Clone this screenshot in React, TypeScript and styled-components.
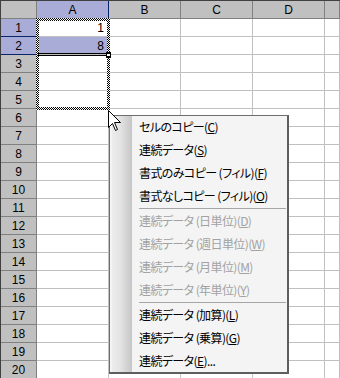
import styled, { createGlobalStyle } from 'styled-components';

const GlobalStyle = createGlobalStyle`
  html, body {
    margin: 0;
    padding: 0;
    background: #fff;
  }
  body {
    font-family: 'Liberation Sans', Arial, sans-serif;
  }
`;

const NAVY = '#0a246a';
const LAVENDER = '#a9acd6';
// column E only peeks in at the right edge, so its label is out of view
const COLS = ['A', 'B', 'C', 'D', 'E'];
const VISIBLE_LABELS = ['A', 'B', 'C', 'D'];
const ROWS = Array.from({ length: 20 }, (_, i) => i + 1);

interface MenuEntry {
  label: string;
  key?: string;
  tail?: string;
  disabled?: boolean;
  separator?: boolean;
}

const menuEntries: MenuEntry[] = [
  { label: 'セルのコピー(', key: 'C', tail: ')' },
  { label: '連続データ(', key: 'S', tail: ')' },
  { label: '書式のみコピー (フィル)(', key: 'F', tail: ')' },
  { label: '書式なしコピー (フィル)(', key: 'O', tail: ')' },
  { label: '', separator: true },
  { label: '連続データ (日単位)(', key: 'D', tail: ')', disabled: true },
  { label: '連続データ (週日単位)(', key: 'W', tail: ')', disabled: true },
  { label: '連続データ (月単位)(', key: 'M', tail: ')', disabled: true },
  { label: '連続データ (年単位)(', key: 'Y', tail: ')', disabled: true },
  { label: '', separator: true },
  { label: '連続データ (加算)(', key: 'L', tail: ')' },
  { label: '連続データ (乗算)(', key: 'G', tail: ')' },
  { label: '連続データ(', key: 'E', tail: ')...' },
];

const cellValues: Record<string, string> = { A1: '1', A2: '8' };

const App = () => {
  return (
    <>
      <GlobalStyle />
      <Window>
        <Sheet>
          <HeaderCell />
          {COLS.map((c) => (
            <HeaderCell key={c} $selected={c === 'A'}>
              {VISIBLE_LABELS.includes(c) ? c : ''}
            </HeaderCell>
          ))}
          {ROWS.map((r) => (
            <Row key={r}>
              <HeaderCell $selected={r <= 2}>{r}</HeaderCell>
              {COLS.map((c) => (
                <Cell key={c} $highlight={c === 'A' && r === 2}>
                  {cellValues[`${c}${r}`]}
                </Cell>
              ))}
            </Row>
          ))}
        </Sheet>

        <Ants width="74" height="92" viewBox="0 0 74 92">
          <defs>
            <pattern id="checker" width="2" height="2" patternUnits="userSpaceOnUse">
              <rect width="2" height="2" fill="#fff" />
              <rect width="1" height="1" fill="#000" />
              <rect x="1" y="1" width="1" height="1" fill="#000" />
            </pattern>
          </defs>
          <path
            fillRule="evenodd"
            fill="url(#checker)"
            d="M0 0H74V92H0Z M3 3V89H71V3Z"
          />
        </Ants>

        <FillHandle width="76" height="8" viewBox="0 0 76 8">
          <rect x="0" y="1" width="70" height="1" fill="#000" />
          <rect x="0" y="3" width="70" height="1" fill="#000" />
          <rect x="69" y="0" width="5" height="6" fill="#000" />
          <rect x="70" y="2" width="3" height="2" fill="#fff" />
        </FillHandle>

        <Menu>
          {menuEntries.map((m, i) =>
            m.separator ? (
              <Separator key={i} />
            ) : (
              <MenuItem key={i} $disabled={m.disabled}>
                {m.label}
                <u>{m.key}</u>
                {m.tail}
              </MenuItem>
            ),
          )}
        </Menu>

        <Cursor width="14" height="22" viewBox="0 0 14 22">
          <path
            d="M0.5 0.5V17.5L4.5 13.5L7.5 20.5L9.5 19.5L6.5 12.5H12.5Z"
            fill="#fff"
            stroke="#000"
            strokeWidth="1"
            strokeLinejoin="miter"
          />
        </Cursor>
      </Window>
    </>
  );
};

export default App;

const Window = styled.div`
  position: relative;
  width: 340px;
  height: 378px;
  overflow: hidden;
  background: #fff;
`;

const Sheet = styled.div`
  display: grid;
  grid-template-columns: 36px repeat(4, 72px) 1fr;
  grid-template-rows: 18px;
  grid-auto-rows: 18px;
  border-top: 1px solid #404040;
  border-left: 1px solid #404040;
`;

const Row = styled.div`
  display: contents;
`;

const HeaderCell = styled.div<{ $selected?: boolean }>`
  box-sizing: border-box;
  display: flex;
  align-items: center;
  justify-content: center;
  background: ${({ $selected }) => ($selected ? LAVENDER : '#c0c0c0')};
  border-right: 1px solid ${({ $selected }) => ($selected ? NAVY : '#808080')};
  border-bottom: 1px solid ${({ $selected }) => ($selected ? NAVY : '#808080')};
  color: #000;
  font-family: 'Liberation Sans', Arial, sans-serif;
  font-size: 12px;
  line-height: 1;
  padding-top: 1px;
`;

const Cell = styled.div<{ $highlight?: boolean }>`
  box-sizing: border-box;
  display: flex;
  align-items: center;
  justify-content: flex-end;
  padding-right: 4px;
  background: ${({ $highlight }) => ($highlight ? LAVENDER : '#fff')};
  border-right: 1px solid #c0c0c0;
  border-bottom: 1px solid #c0c0c0;
  color: #000;
  font-family: 'Liberation Sans', Arial, sans-serif;
  font-size: 12px;
  line-height: 1;
  padding-top: 1px;
`;

const Ants = styled.svg`
  position: absolute;
  left: 36px;
  top: 18px;
  display: block;
`;

const FillHandle = styled.svg`
  position: absolute;
  left: 37px;
  top: 52px;
  display: block;
`;

const Menu = styled.div`
  position: absolute;
  left: 109px;
  top: 115px;
  width: 180px;
  box-sizing: border-box;
  display: flex;
  flex-direction: column;
  border: 1px solid #6e6e6e;
  border-right: 2px solid #5e5e5e;
  border-bottom: 2px solid #5e5e5e;
  background: linear-gradient(
    90deg,
    #f4f4f4 0px,
    #f4f4f4 2px,
    #ececec 2px,
    #e4e4e4 10px,
    #d2d2d2 17px,
    #c6c6c6 22px,
    #f4f4f4 22px
  );
`;

const MenuItem = styled.div<{ $disabled?: boolean }>`
  height: 22.75px;
  display: flex;
  align-items: center;
  padding-left: 29px;
  white-space: nowrap;
  color: ${({ $disabled }) => ($disabled ? '#a2a2a2' : '#000')};
  font-family: 'Noto Sans CJK JP', 'Liberation Sans', sans-serif;
  font-size: 12px;
  letter-spacing: -0.6px;
  font-feature-settings: 'palt';
  line-height: 1;

  u {
    text-decoration-thickness: 1px;
    text-underline-offset: 1px;
  }
`;

const Separator = styled.div`
  height: 3px;
  display: flex;
  align-items: center;
  margin-left: 29px;
  margin-right: 1px;

  &::after {
    content: '';
    flex: 1;
    height: 1px;
    background: #a6a6a6;
  }
`;

const Cursor = styled.svg`
  position: absolute;
  left: 108px;
  top: 110px;
  display: block;
`;
